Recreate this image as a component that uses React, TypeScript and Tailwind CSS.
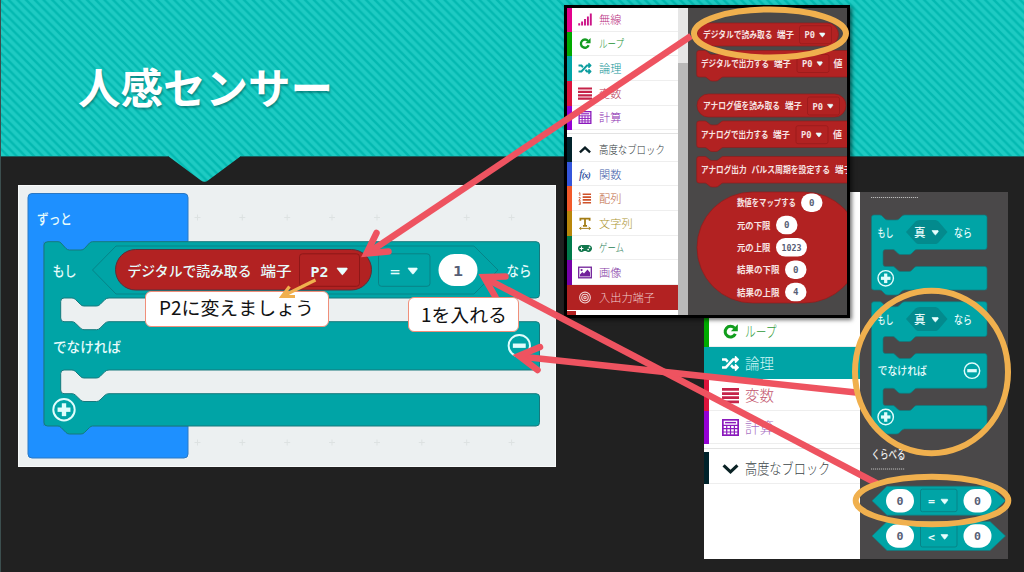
import React from 'react';
import { FaGamepad, FaRandom } from 'react-icons/fa';

const TEAL = '#00a4a6';
const RED = '#b22222';

type TextProps = { x: number; y: number; w: number; size?: number; fill?: string; weight?: number; mono?: boolean; children: string };

function T({ x, y, w, size = 14, fill = '#e6fbfb', weight = 500, mono, children }: TextProps) {
  return (
    <text
      x={x}
      y={y}
      fill={fill}
      fontSize={size}
      fontWeight={weight}
      textLength={w}
      lengthAdjust="spacingAndGlyphs"
      className={mono ? "font-['DejaVu_Sans_Mono',monospace]" : "font-['Noto_Sans_CJK_JP',sans-serif]"}
    >
      {children}
    </text>
  );
}

function Tri({ x, y, w = 10 }: { x: number; y: number; w?: number }) {
  const h = w * 0.58;
  return (
    <path
      d={`M${x + 0.5} ${y}h${w - 1}l.3 1l-${w / 2 - 1.2} ${h - 1}q-.6.6 -1.2 0l-${w / 2 - 1.2} -${h - 1}z`}
      fill="#e9ffff"
      stroke="#e9ffff"
      strokeWidth=".6"
      strokeLinejoin="round"
    />
  );
}

function Circled({ x, y, r, minus }: { x: number; y: number; r: number; minus?: boolean }) {
  const a = r * 0.56;
  return (
    <g stroke="#e0fdfc" fill="none">
      <circle cx={x} cy={y} r={r - 0.8} strokeWidth={r * 0.17} />
      <path d={`M${x - a} ${y}h${a * 2}`} strokeWidth={r * 0.38} />
      {!minus && <path d={`M${x} ${y - a}v${a * 2}`} strokeWidth={r * 0.38} />}
    </g>
  );
}

function Num({ x, y, w, h, tx, tw, size, children }: { x: number; y: number; w: number; h: number; tx: number; tw: number; size: number; children: string }) {
  return (
    <g>
      <rect x={x} y={y} width={w} height={h} rx={h / 2} fill="#fff" />
      <T x={tx} y={y + h / 2 + size * 0.42} w={tw} size={size} fill="#575e75" weight={700} mono>
        {children}
      </T>
    </g>
  );
}

function Header() {
  return (
    <header className="relative h-[156px] w-full shrink-0">
      <svg className="absolute left-0 top-0" width="1024" height="184" viewBox="0 0 1024 184">
        <defs>
          <pattern id="stripes" width="8" height="8" patternUnits="userSpaceOnUse" patternTransform="scale(1.09)">
            <rect width="8" height="8" fill="#1ecbc3" />
            <path d="M-2 -2L10 10M-2 6L2 10M6 -2L10 2" stroke="#03b9b1" strokeWidth="2.3" />
          </pattern>
        </defs>
        <path d="M0 0H1024V156H241L208 180.5Q204.500 183 201 180.500L168 156H0Z" fill="url(#stripes)" />
        <path d="M0 156.500H169M240 156.500H1024" stroke="#17605e" strokeWidth="1" />
      </svg>
      <h1 className="relative pl-[78px] pt-[56px] font-['Noto_Sans_CJK_JP',sans-serif] text-[42.500px] font-bold leading-[60px] text-white [text-shadow:1px_2px_2px_rgba(0,70,70,.45)]">
        人感センサー
      </h1>
    </header>
  );
}

const crossX = [197.5, 242.3, 287.2, 332, 377, 421.8, 466.7, 511.6];

function Workspace() {
  return (
    <section className="absolute left-[18px] top-[185px] h-[282px] w-[538px] border border-[#f8fafa] bg-[#ecf0f1]">
      <svg className="absolute -left-px -top-px" width="538" height="282" viewBox="18 185 538 282">
        <g stroke="#dde2e2" strokeWidth="1">
          {[217.5, 442.5].map((y) => crossX.map((x) => <path key={`${x}-${y}`} d={`M${x - 3} ${y}h6M${x} ${y - 3}v6`} />))}
        </g>
        <path
          d="M32 193.500H184Q188 193.500 188 197.500V241.500H44V426H188V454Q188 458 184 458H32Q28 458 28 454V197.500Q28 193.500 32 193.500Z"
          fill="#1e90ff"
          stroke="#2a78c4"
          strokeWidth="1"
        />
        <path d="M44 238H110V252H44ZM44 420H110V440H44Z" fill="#1e90ff" />
        <path
          d="M48 241.700H58Q60 241.700 61 243L66 248.500Q67.500 250 69.500 250H81Q83 250 84.500 248.500L89.500 243Q91 241.700 92.500 241.700H536Q539.500 241.700 539.500 245V294.500Q539.500 298 536 298H109Q106.500 298 105 299.500L100 304.500Q98.500 306 96.500 306H84Q82 306 80.500 304.500L75.500 299.500Q74 298 72 298H64Q60.700 298 60.700 301.500V318Q60.700 321.700 64 321.700H72Q74 321.700 75.500 323.200L80.500 328.200Q82 329.700 84 329.700H96.500Q98.500 329.700 100 328.200L105 323.200Q106.500 321.700 109 321.700H536Q539.500 321.700 539.500 325V366.500Q539.500 370 536 370H109Q106.500 370 105 371.500L100 376.500Q98.500 378 96.500 378H84Q82 378 80.500 376.500L75.500 371.500Q74 370 72 370H64Q60.700 370 60.700 373.500V390Q60.700 393.700 64 393.700H72Q74 393.700 75.500 395.200L80.500 400Q82 401.500 84 401.500H96.500Q98.500 401.500 100 400L105 395.200Q106.500 393.700 109 393.700H536Q539.500 393.700 539.500 397V422.500Q539.500 426 536 426H92.500Q91 426 89.500 427.500L84.500 432.500Q83 434 81 434H69.500Q67.500 434 66 432.500L61 427.500Q60 426 58 426H47.500Q44 426 44 422.500V245Q44 241.700 48 241.700Z"
          fill={TEAL}
          stroke="#16797d"
          strokeWidth="1"
        />
        <path d="M116 246H474L498 270L474 294H116L92.500 270Z" fill="none" stroke="#068488" strokeWidth="1" />
        <rect x="115.500" y="249.500" width="256" height="40.500" rx="20.200" fill={RED} stroke="#5c2f38" />
        <rect x="299.500" y="253.800" width="60" height="32.500" rx="3" fill="none" stroke="#8e1717" />
        <rect x="378.500" y="253.800" width="51.500" height="32.500" rx="3" fill="none" stroke="#088387" />
        <T x={37} y={223.500} w={35}>ずっと</T>
        <T x={52.500} y={276} w={24}>もし</T>
        <T x={127.500} y={276} w={124}>デジタルで読み取る</T>
        <T x={260.500} y={276} w={31}>端子</T>
        <T x={310.500} y={276.500} w={18} size={13.500} weight={700} mono>P2</T>
        <Tri x={336.500} y={268} w={11} />
        <T x={390} y={276} w={10} size={13} weight={700} mono>=</T>
        <Tri x={407.500} y={268} w={10} />
        <Num x={438.500} y={254} w={39} h={32} tx={453} tw={10} size={14}>1</Num>
        <T x={506.500} y={276} w={25}>なら</T>
        <T x={53} y={352} w={68}>でなければ</T>
        <Circled x={64} y={409.700} r={11.500} />
        <Circled x={519.300} y={345.700} r={11.500} minus />
      </svg>
    </section>
  );
}

type Cat = { name: string; strip: string; text: string; squeeze?: string; icon: React.ReactNode; active?: string };

const redo = (
  <svg viewBox="0 0 14 14" className="h-full w-full" fill="none" stroke="currentColor">
    <path d="M10.300 4.200A4.400 4.400 0 1 0 11 9" strokeWidth="2.500" />
    <path d="M13 1v5.700H7.300z" fill="currentColor" stroke="none" />
  </svg>
);
const bars = (
  <svg viewBox="0 0 14 13" className="h-full w-full">
    <path d="M0 1.500h14M0 4.900h14M0 8.300h14M0 11.700h14" stroke="currentColor" strokeWidth="2.200" />
  </svg>
);
const calc = (
  <svg viewBox="0 0 14 14" className="h-full w-full" fill="none" stroke="currentColor">
    <rect x=".7" y=".7" width="12.600" height="12.600" strokeWidth="1.400" />
    <path d="M.7 5.200h12.600M.7 8h12.600M.7 10.700h12.600M3.900 5v8M7 5v8M10.200 5v8" strokeWidth="1" />
    <path d="M2.500 3h9" strokeWidth="1.200" />
  </svg>
);
const chevron = (up: boolean) => (
  <svg viewBox="0 0 14 14" className="h-full w-full" fill="none" stroke="currentColor" strokeWidth="2.600">
    <path d={up ? 'M1.500 10L7 5L12.500 10' : 'M1.300 4.500L7 9.800L12.700 4.500'} />
  </svg>
);
const signal = (
  <svg viewBox="0 0 14 12" className="h-full w-full">
    <path d="M1.200 12V9.700M4.100 12V8M7 12V5.500M9.900 12V3M12.800 12V0" stroke="currentColor" strokeWidth="1.900" />
  </svg>
);
const list = (
  <svg viewBox="0 0 14 14" className="h-full w-full" fill="none" stroke="currentColor">
    <path d="M4.500 2.500h9M4.500 5.500h9M4.500 8.500h9M4.500 11.500h9" strokeWidth="1.700" />
    <path d="M.3 1.500l1.200-.8v3.500M.2 6h1.600v1.200L.3 9h2M.2 10.500h1.800v3H.2M.6 12h1.300" strokeWidth=".9" />
  </svg>
);
const tee = (
  <svg viewBox="0 0 14 14" className="h-full w-full" fill="none" stroke="currentColor">
    <path d="M2 4V1.800h10V4M7 2v7.500M4.800 9.500h4.400" strokeWidth="1.900" />
    <path d="M1.500 12.300h11M3 10.800L1 12.300L3 13.800M11 10.800L13 12.300L11 13.800" strokeWidth="1" />
  </svg>
);
const image = (
  <svg viewBox="0 0 14 12" className="h-full w-full" fill="none" stroke="currentColor">
    <rect x=".7" y=".7" width="12.600" height="10.600" strokeWidth="1.300" />
    <path d="M2 10V8l2.300-2.500L6 7l3.500-4L12 6v4z" fill="currentColor" stroke="none" />
    <circle cx="3.600" cy="3.600" r="1.100" fill="currentColor" stroke="none" />
  </svg>
);
const target = (
  <svg viewBox="0 0 14 14" className="h-full w-full" fill="none" stroke="currentColor">
    <circle cx="7" cy="7" r="5.800" strokeWidth="1.100" />
    <circle cx="7" cy="7" r="3.500" strokeWidth="1.200" />
    <circle cx="7" cy="7" r="1.300" strokeWidth="1.200" />
  </svg>
);
const fx = <span className="font-['Liberation_Serif',serif] text-[12.500px] italic leading-none tracking-[-.8px]">f<span className="text-[9px] font-bold">(x)</span></span>;

const topCats: Cat[] = [
  { name: '無線', strip: 'border-[#e3008c] text-[#cc1387]', text: 'text-[#b9307f]', icon: signal },
  { name: 'ループ', strip: 'border-[#00aa00] text-[#139b20]', text: 'text-[#249331]', squeeze: 'scale-x-[.76]', icon: redo },
  { name: '論理', strip: 'border-[#00a4a6] text-[#0b9d9f]', text: 'text-[#159799]', icon: <FaRandom className="h-full w-full" /> },
  { name: '変数', strip: 'border-[#dc143c] text-[#c52349]', text: 'text-[#b93c58]', icon: bars },
  { name: '計算', strip: 'border-[#9400d3] text-[#8b19bc]', text: 'text-[#8a2cb0]', icon: calc },
];
const advCats: Cat[] = [
  { name: '高度なブロック', strip: 'border-[#00222a] text-[#0a1c22]', text: 'text-[#2f383b]', squeeze: 'scale-x-[.84]', icon: chevron(true) },
  { name: '関数', strip: 'border-[#3455db] text-[#294b9c]', text: 'text-[#3c5ba8]', icon: fx },
  { name: '配列', strip: 'border-[#f1592a] text-[#cf5229]', text: 'text-[#c0683f]', icon: list },
  { name: '文字列', strip: 'border-[#b8860b] text-[#a37c14]', text: 'text-[#ac9430]', icon: tee },
  { name: 'ゲーム', strip: 'border-[#007a4b] text-[#12774d]', text: 'text-[#1f7d56]', squeeze: 'scale-x-[.75]', icon: <FaGamepad className="h-full w-full" /> },
  { name: '画像', strip: 'border-[#7600a8] text-[#71209a]', text: 'text-[#843aa5]', icon: image },
  { name: '入出力端子', strip: 'border-[#b22222] text-[#f2d5d5]', text: 'text-[#f0cccc]', icon: target, active: 'bg-[#b22222]' },
];

function Row({ c, big }: { c: Cat; big?: boolean }) {
  return (
    <div
      className={`flex shrink-0 items-center border-l-[5px] ${c.strip} ${c.active ?? 'bg-white shadow-[inset_0_-1px_0_#eeeeee]'} ${
        big ? 'h-[32.100px] pl-[13px]' : 'h-[24.650px] pl-[5.500px]'
      }`}
    >
      <span className={`flex shrink-0 items-center justify-center ${big ? 'h-[17px] w-[17px]' : 'h-[13px] w-[14px]'}`}>{c.icon}</span>
      <span
        className={`origin-left whitespace-nowrap font-['Noto_Sans_CJK_JP',sans-serif] font-light leading-none ${c.text} ${c.squeeze ?? ''} ${
          big ? 'ml-[6px] text-[14.500px]' : 'ml-[7.500px] text-[11.200px]'
        }`}
      >
        {c.name}
      </span>
    </div>
  );
}

const lowCats: Cat[] = [
  { name: 'ループ', strip: 'border-[#00aa00] text-[#109d1c]', text: 'text-[#2f9a38]', squeeze: 'scale-x-[.74]', icon: redo },
  { name: '論理', strip: 'border-[#00a4a6] text-white', text: 'text-[#d0f6f6]', icon: <FaRandom className="h-full w-full" />, active: 'bg-[#00a4a6]' },
  { name: '変数', strip: 'border-[#dc143c] text-[#c52349]', text: 'text-[#c3566e]', icon: bars },
  { name: '計算', strip: 'border-[#9400d3] text-[#8b19bc]', text: 'text-[#a873c3]', icon: calc },
];
const lowAdv: Cat = { name: '高度なブロック', strip: 'border-[#00222a] text-[#0a2225]', text: 'text-[#3b4447]', squeeze: 'scale-x-[.84]', icon: chevron(false) };

function IfTop({ y }: { y: number }) {
  return (
    <g>
      <path d={`M920 ${y + 5}H935.500Q937 ${y + 5} 938.500 ${y + 6.500}L947.500 ${y + 17}L938.500 ${y + 27.500}Q937 ${y + 29} 935.500 ${y + 29}H918.500Q917 ${y + 29} 915.500 ${y + 27.500}L906 ${y + 17}L915.500 ${y + 6.500}Q917 ${y + 5} 920 ${y + 5}Z`} fill="#038a8d" />
      <T x={877.500} y={y + 21.500} w={16} size={11.500}>もし</T>
      <T x={914} y={y + 21.500} w={11.500} size={11.500}>真</T>
      <Tri x={931.500} y={y + 15.500} w={7} />
      <T x={954} y={y + 21.500} w={18} size={11.500}>なら</T>
    </g>
  );
}

const top = (y: number) => `M874 ${y}H880Q881.500 ${y} 882.500 ${y + 1.500}L885 ${y + 4}Q886 ${y + 5} 888 ${y + 5}H896Q898 ${y + 5} 899 ${y + 4}L901.500 ${y + 1.500}Q903 ${y} 904.500 ${y}H984.500Q987 ${y} 987 ${y + 2.500}`;
const slot = (a: number, b: number) =>
  `V${a - 2.500}Q987 ${a} 984.500 ${a}H917Q915.500 ${a} 914.500 ${a + 1}L911.500 ${a + 4}Q910.500 ${a + 5} 909 ${a + 5}H900.500Q899 ${a + 5} 898 ${a + 4}L895 ${a + 1}Q894 ${a} 893 ${a}H885.500Q883 ${a} 883 ${a + 2.500}V${b - 2.500}Q883 ${b} 885.500 ${b}H893Q894 ${b} 895 ${b + 1}L898 ${b + 4}Q899 ${b + 5} 900.500 ${b + 5}H909Q910.500 ${b + 5} 911.500 ${b + 4}L914.500 ${b + 1}Q915.500 ${b} 917 ${b}H984.500Q987 ${b} 987 ${b + 2.500}`;
const end = (b: number, y: number) =>
  `V${b - 2.500}Q987 ${b} 984.500 ${b}H904.500Q903 ${b} 901.500 ${b + 1.500}L899 ${b + 4}Q898 ${b + 5} 896 ${b + 5}H888Q886 ${b + 5} 885 ${b + 4}L882.500 ${b + 1.500}Q881.500 ${b} 880 ${b}H874Q871.500 ${b} 871.500 ${b - 2.500}V${y + 2.500}Q871.500 ${y} 874 ${y}Z`;

function Compare({ y, op }: { y: number; op: string }) {
  return (
    <g>
      <path d={`M887 ${y - 14.500}H990L1005.500 ${y}L990 ${y + 14.500}H887L872 ${y}Z`} fill={TEAL} stroke="#16797d" strokeWidth=".7" />
      <Num x={886} y={y - 11.700} w={28} h={23.400} tx={896.500} tw={7} size={10}>0</Num>
      <rect x="920.500" y={y - 11.500} width="36.500" height="22.500" rx="2" fill="none" stroke="#078488" />
      <T x={928} y={y + 4.500} w={7} size={10} weight={700} mono>{op}</T>
      <Tri x={940.500} y={y - 1.500} w={7.500} />
      <Num x={963.500} y={y - 11.700} w={28} h={23.400} tx={974} tw={7} size={10}>0</Num>
    </g>
  );
}

function LogicPanel() {
  return (
    <section className="absolute left-[704px] top-[192px] flex h-[367px] w-[304px] bg-white">
      <div className="flex w-[156px] flex-col pt-[123.200px]">
        {lowCats.map((c) => (
          <Row key={c.name} c={c} big />
        ))}
        <div className="mb-[3.500px] h-[5px] border-b border-[#e3e3e3]" />
        <Row c={lowAdv} big />
      </div>
      <svg className="bg-[#4a4849]" width="148" height="367" viewBox="860 192 148 367">
        <path d="M871 197.500H918M871 469H905" stroke="#bbb" strokeWidth="1" strokeDasharray="1.200 .8" />
        <path d={top(215) + slot(249.500, 266.500) + end(290, 215)} fill={TEAL} stroke="#0e7b7e" strokeWidth=".7" />
        <IfTop y={215} />
        <Circled x={885.700} y={278.300} r={8.500} />
        <path d={top(301.700) + slot(336.500, 353.500) + slot(388.300, 405.500) + end(429, 301.700)} fill={TEAL} stroke="#0e7b7e" strokeWidth=".7" />
        <IfTop y={302} />
        <T x={877.500} y={375.300} w={49.500} size={11.500}>でなければ</T>
        <Circled x={972} y={370.700} r={8.500} minus />
        <Circled x={885.700} y={417} r={8.500} />
        <T x={871.500} y={458.500} w={34} size={12} fill="#eee">くらべる</T>
        <Compare y={500.700} op="=" />
        <Compare y={536} op="<" />
      </svg>
    </section>
  );
}

function PinBlock({ y, title, w, tx, children }: { y: number; title: string; w: number; tx: number; children?: React.ReactNode }) {
  return (
    <g>
      <path
        d={`M699 ${y}H705Q706 ${y} 707 ${y + 1}L709.500 ${y + 3}Q710.500 ${y + 4} 712 ${y + 4}H716Q717.500 ${y + 4} 718.500 ${y + 3}L721 ${y + 1}Q722 ${y} 723 ${y}H860V${y + 26.500}H723Q722 ${y + 26.500} 721 ${y + 27.500}L718.500 ${y + 29.500}Q717.500 ${y + 30.500} 716 ${y + 30.500}H712Q710.500 ${y + 30.500} 709.500 ${y + 29.500}L707 ${y + 27.500}Q706 ${y + 26.500} 705 ${y + 26.500}H699Q696.700 ${y + 26.500} 696.700 ${y + 24}V${y + 2.500}Q696.700 ${y} 699 ${y}Z`}
        fill={RED}
        stroke="#8c1d1d"
        strokeWidth=".7"
      />
      <T x={701} y={y + 16.700} w={w} size={9} weight={700} fill="#f7e3e3">{title}</T>
      <T x={tx} y={y + 16.700} w={17} size={9} weight={700} fill="#f7e3e3">端子</T>
      {children}
    </g>
  );
}

function Pin({ x, y }: { x: number; y: number }) {
  return (
    <g>
      <rect x={x - 5} y={y - 9} width="32" height="18" rx="2" fill="none" stroke="#981a1a" strokeWidth=".8" />
      <T x={x} y={y + 3.500} w={10.500} size={8} fill="#f7e3e3" weight={700} mono>P0</T>
      <Tri x={x + 14.500} y={y - 1.700} w={6} />
    </g>
  );
}

const mapRows = [
  { t: '数値をマップする', w: 59, px: 801, pw: 21.500, v: '0' },
  { t: '元の下限', w: 33.500, px: 776, pw: 21.500, v: '0' },
  { t: '元の上限', w: 33.500, px: 776, pw: 31, v: '1023' },
  { t: '結果の下限', w: 42.500, px: 785, pw: 21.500, v: '0' },
  { t: '結果の上限', w: 42.500, px: 785, pw: 21.500, v: '4' },
];

function PinsPanel() {
  return (
    <section className="absolute left-[564px] top-[5px] flex h-[313px] w-[286px] overflow-hidden border-[3px] border-black bg-white shadow-[2px_2px_4px_rgba(0,0,0,.55)]">
      <div className="-mt-px flex w-[111px] shrink-0 flex-col">
        {topCats.map((c) => (
          <Row key={c.name} c={c} />
        ))}
        <div className="mb-[3px] h-[4px] shrink-0 border-b border-[#e3e3e3]" />
        {advCats.map((c) => (
          <Row key={c.name} c={c} />
        ))}
        <div className="mt-px h-[6px] shrink-0 border-l-[9px] border-[#b22222]" />
      </div>
      <div className="w-[10px] shrink-0 bg-[#b9b9b9]">
        <div className="h-[55px] bg-[#e6e6e6]" />
      </div>
      <svg className="shrink-0 bg-[#4a4848]" width="159" height="307" viewBox="688 8 159 307">
        <rect x="697" y="23" width="141.500" height="23" rx="11.500" fill={RED} stroke="#8c1d1d" strokeWidth=".7" />
        <T x={703} y={38} w={69.500} size={9} weight={700} fill="#f7e3e3">デジタルで読み取る</T>
        <T x={777} y={38} w={17} size={9} weight={700} fill="#f7e3e3">端子</T>
        <Pin x={804.500} y={34.700} />
        <PinBlock y={50.500} title="デジタルで出力する" w={68} tx={774}>
          <Pin x={802} y={63.500} />
          <T x={833.500} y={67.200} w={9} size={9} weight={700} fill="#f7e3e3">値</T>
        </PinBlock>
        <rect x="697" y="94" width="149" height="23" rx="11.500" fill={RED} stroke="#8c1d1d" strokeWidth=".7" />
        <T x={703} y={109.300} w={77} size={9} weight={700} fill="#f7e3e3">アナログ値を読み取る</T>
        <T x={785} y={109.300} w={17} size={9} weight={700} fill="#f7e3e3">端子</T>
        <Pin x={812.500} y={106} />
        <PinBlock y={121} title="アナログで出力する" w={67.500} tx={773}>
          <Pin x={801} y={134.700} />
          <T x={833} y={137.700} w={9} size={9} weight={700} fill="#f7e3e3">値</T>
        </PinBlock>
        <PinBlock y={156.500} title="アナログ出力" w={45.500} tx={835}>
          <T x={751.500} y={173.200} w={78.500} size={9} weight={700} fill="#f7e3e3">パルス周期を設定する</T>
        </PinBlock>
        <rect x="697" y="192" width="163" height="111" rx="55.500" fill={RED} stroke="#8c1d1d" strokeWidth=".7" />
        {mapRows.map((r, i) => (
          <g key={r.t}>
            <T x={737} y={206.300 + i * 22.300} w={r.w} size={9} weight={700} fill="#f7e3e3">{r.t}</T>
            <Num x={r.px} y={193.500 + i * 22.300} w={r.pw} h={18.500} tx={r.v.length > 1 ? 781.500 : r.px + 8} tw={r.v.length > 1 ? 20 : 5.500} size={8}>{r.v}</Num>
          </g>
        ))}
      </svg>
    </section>
  );
}

function Annotations() {
  return (
    <svg className="pointer-events-none absolute left-0 top-0" width="1024" height="572" viewBox="0 0 1024 572" fill="none">
      <g stroke="#ee5360" strokeWidth="6.500">
        <path d="M691 36L368 253" />
        <path d="M877 483.500L487 279" />
        <path d="M856 392.500L520 356.500" />
      </g>
      <g stroke="#ee5360" strokeWidth="6.500" strokeLinecap="round" strokeLinejoin="miter">
        <path d="M376.500 233L366.500 253.500L388.500 251.500" />
        <path d="M505.500 276.500L484 277L495.500 297" />
        <path d="M540 347L519 355.800L537.500 370" />
      </g>
      <g stroke="#f0b04e" strokeWidth="6">
        <ellipse cx="770" cy="33.500" rx="76" ry="24" />
        <ellipse cx="931.500" cy="372" rx="76.500" ry="81.300" />
        <ellipse cx="932" cy="500.500" rx="76.300" ry="23.700" />
      </g>
    </svg>
  );
}

export default function App() {
  return (
    <main className="relative flex h-[572px] w-[1024px] flex-col overflow-hidden bg-[#212121]">
      <Header />
      <Workspace />
      <LogicPanel />
      <PinsPanel />
      <Annotations />
      <div className="absolute left-[145px] top-[291px] flex h-[36px] w-[184px] items-center justify-center rounded-[6px] border-[1.500px] border-[#f08f7a] bg-white">
        <svg className="overflow-visible" width="156" height="30" viewBox="0 0 156 30">
          <T x={0} y={21} w={155} size={18.500} fill="#111" weight={400}>P2に変えましょう</T>
        </svg>
      </div>
      <div className="absolute left-[408px] top-[297px] flex h-[35px] w-[111px] items-center justify-center rounded-[6px] border-[1.500px] border-[#f08f7a] bg-white">
        <svg className="overflow-visible" width="86" height="30" viewBox="0 0 86 30">
          <T x={0} y={22} w={86} size={18.500} fill="#111" weight={400}>1を入れる</T>
        </svg>
      </div>
      <svg className="absolute left-[276px] top-[276px]" width="44" height="26" viewBox="276 276 44 26" fill="none" stroke="#f0b04e" strokeWidth="3.200">
        <path d="M315.500 280L283 296M289.500 286.500L282 296.500L295 296.500" />
      </svg>
      <div className="absolute left-0 top-0 h-full w-px bg-[#3c4f4f]" />
    </main>
  );
}
